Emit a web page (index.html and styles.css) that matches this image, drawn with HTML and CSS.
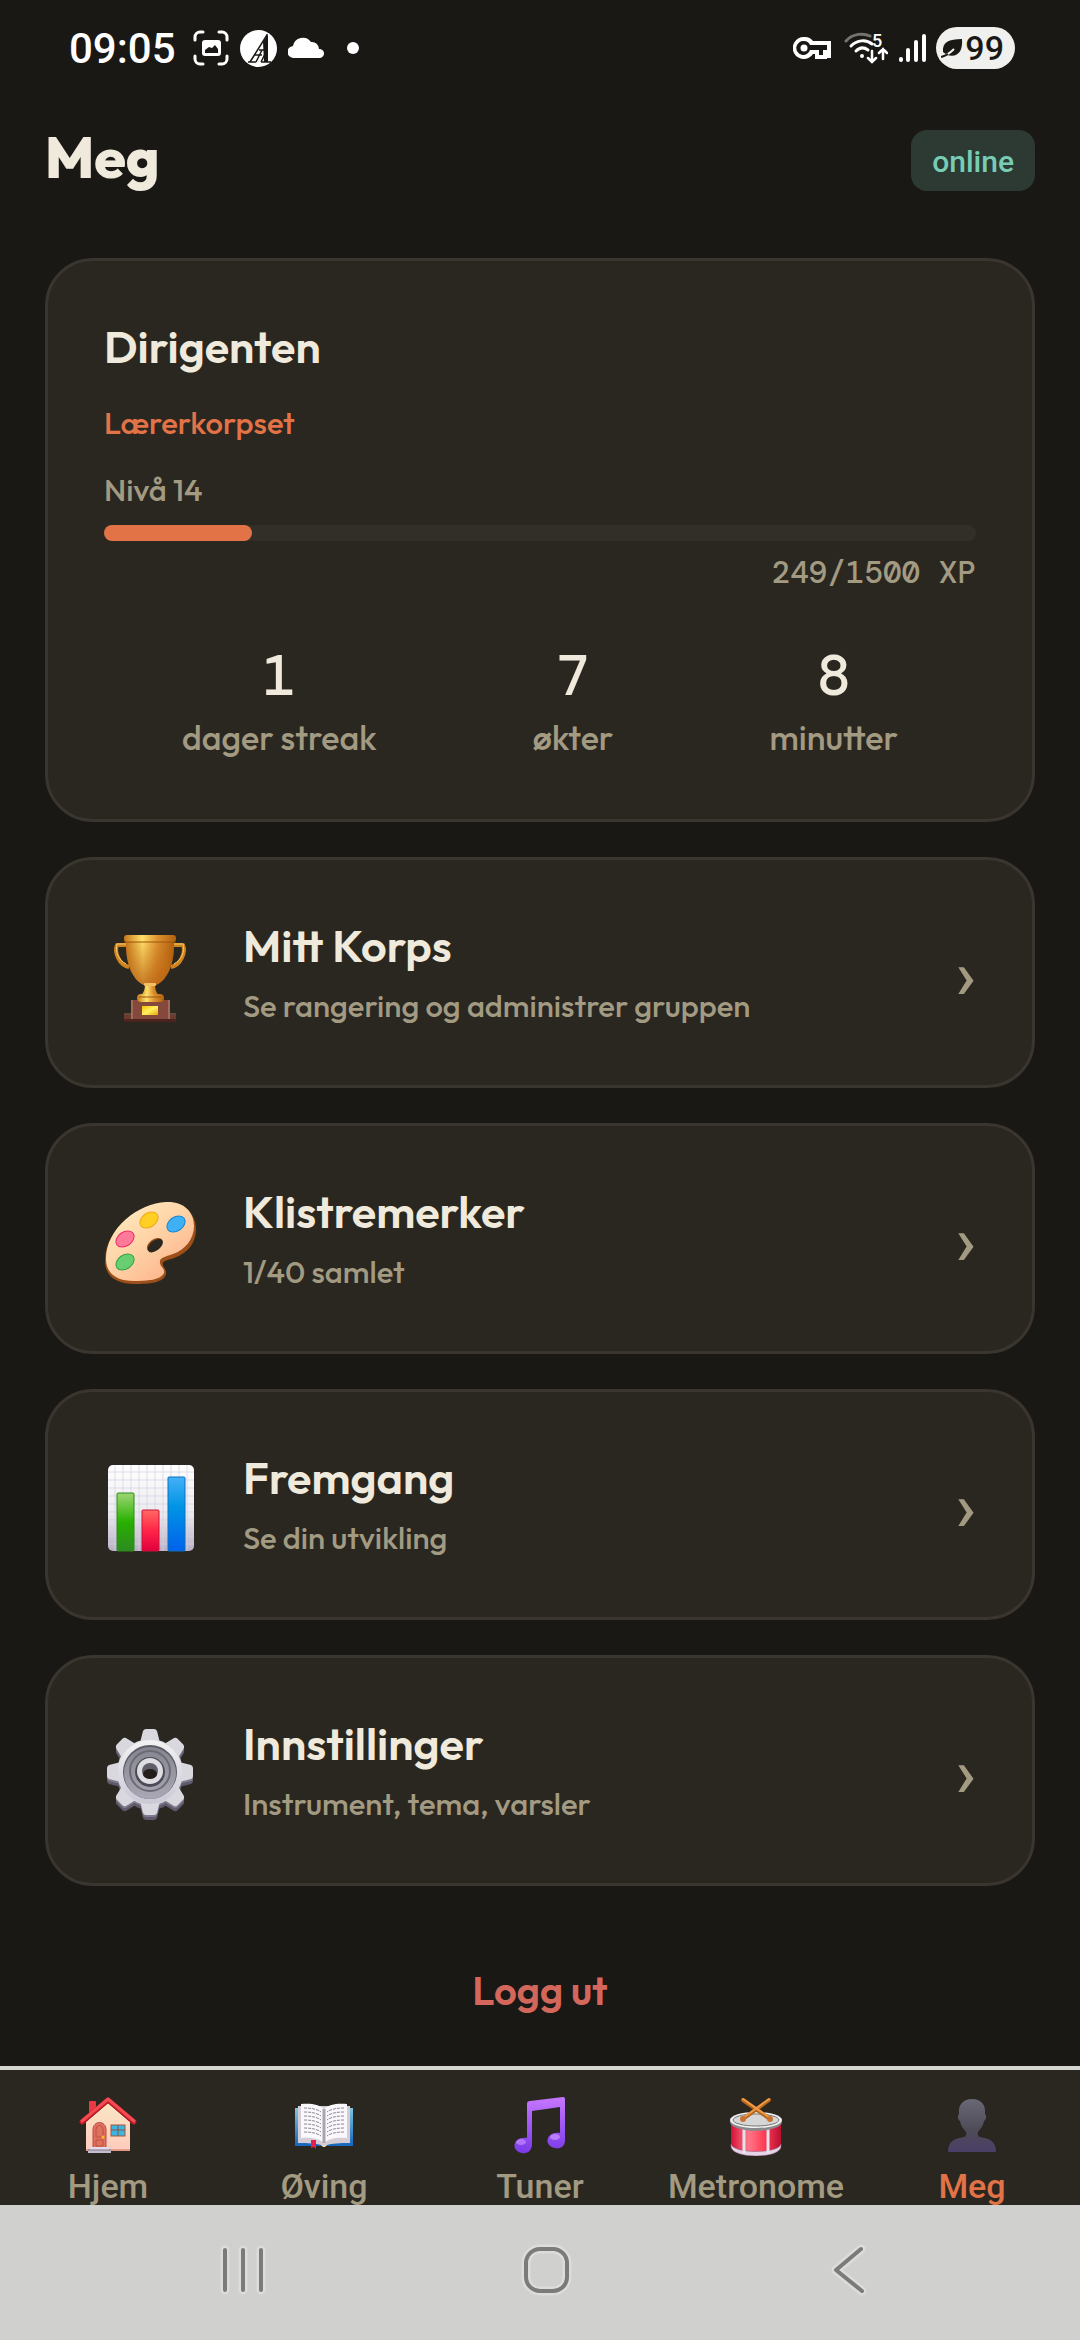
FILE: index.html
```html
<!DOCTYPE html>
<html lang="no">
<head>
<meta charset="utf-8">
<meta name="viewport" content="width=device-width, initial-scale=1">
<title>Meg</title>
<link rel="stylesheet" href="styles.css">
</head>
<body>
<div class="app">
  <div class="status">
    <div class="status-group">
      <span class="clock">09:05</span>
      <svg width="36" height="36" viewBox="0 0 36 36" fill="none" stroke="#fff" stroke-width="3" stroke-linecap="round"><path d="M2 10V7a5 5 0 0 1 5-5h3M26 2h3a5 5 0 0 1 5 5v3M34 26v3a5 5 0 0 1-5 5h-3M10 34H7a5 5 0 0 1-5-5v-3"/><rect x="9" y="10" width="19" height="16" rx="3" fill="#fff" stroke="none"/><path d="M12 23v-3l4-3 3 1 3-3 3 4v4z" fill="#1a1814" stroke="none"/></svg>
      <svg width="37" height="37" viewBox="0 0 37 37"><circle cx="18.500" cy="18.500" r="18.500" fill="#fff"/><path d="M27 4v28M27 5L10 32M8 32h8M21 32h10M14 25h8M19 20h5M22 20l-6 12M25 24l-4 8" stroke="#1a1814" stroke-width="1.500" fill="none"/><path d="M23 12l5-7v27h-4z" fill="#1a1814"/></svg>
      <svg width="37" height="22" viewBox="0 0 37 22"><path d="M6 21a6 6 0 0 1-1-12 10 10 0 0 1 18-4 7 7 0 0 1 8 7 4.500 4.500 0 0 1 1 9z" fill="#fff"/></svg>
      <span class="dot"></span>
    </div>
    <div class="status-group right">
      <svg width="38" height="22" viewBox="0 0 38 22"><path fill="#fff" fill-rule="evenodd" d="M11 0a11 11 0 0 1 9 4h18v17h-4v1H22v-5h-2A11 11 0 1 1 11 0zm0 4a7 7 0 1 0 6 9h9v5h4v-5h4V8H17a7 7 0 0 0-6-4z"/><circle cx="11" cy="11" r="3.500" fill="#fff"/></svg>
      <svg class="wifi" width="44" height="36" viewBox="0 -2 44 36" fill="none" stroke="#fff" stroke-width="3" stroke-linecap="round"><path d="M2 9C9 1 20 1 26 4" stroke="#75736f"/><path d="M7 14c6-6 15-7 21-2M12 19c4-4 8-4 12-1"/><circle cx="18" cy="24" r="2" fill="#fff" stroke="none"/><path d="M28 19v10M24 26l4 4 4-4M39 27V17M35 21l4-4 4 4" stroke-width="2.500"/><text x="28" y="15" class="wifi-band">5</text></svg>
      <svg width="28" height="30" viewBox="0 0 28 30" stroke="#fff" stroke-width="4" stroke-linecap="round"><path d="M3 26v1M10 17v10M18 9v18M26 3v24"/></svg>
      <span class="battery"><svg width="22" height="20" viewBox="0 0 22 20"><path d="M2 14C1 4 8 1 21 1c1 12-4 19-15 16z" fill="#1a1814"/><path d="M0 19c5-1 9-4 13-8" stroke="#f0f0ee" stroke-width="2" fill="none"/><path d="M0 19c3-1 4-1 7-3" stroke="#1a1814" stroke-width="2" fill="none"/></svg>99</span>
    </div>
  </div>

  <header class="header">
    <h1>Meg</h1>
    <span class="badge">online</span>
  </header>

  <main class="content">
    <section class="card profile">
      <h2>Dirigenten</h2>
      <p class="group">Lærerkorpset</p>
      <p class="level">Nivå 14</p>
      <div class="progress" role="progressbar" aria-label="XP" aria-valuenow="249" aria-valuemax="1500"><div class="progress-fill" style="width:17%"></div></div>
      <p class="xp">249/1500 XP</p>
      <div class="stats">
        <div class="stat"><span class="stat-value">1</span><span class="stat-label">dager streak</span></div>
        <div class="stat"><span class="stat-value">7</span><span class="stat-label">økter</span></div>
        <div class="stat"><span class="stat-value">8</span><span class="stat-label">minutter</span></div>
      </div>
    </section>

    <a class="card menu" href="#korps">
      <svg class="menu-icon" viewBox="0 0 92 92">
        <defs>
          <linearGradient id="gold" x1="0" x2="1" y1="0" y2="0"><stop offset="0" stop-color="#c4761a"/><stop offset=".35" stop-color="#ffe06a"/><stop offset=".65" stop-color="#dc9030"/><stop offset="1" stop-color="#b0600c"/></linearGradient>
          <linearGradient id="goldShade" x1="0" x2="0" y1="0" y2="1"><stop offset="0" stop-color="#b85f10" stop-opacity="0"/><stop offset="1" stop-color="#b85f10" stop-opacity=".8"/></linearGradient>
          <linearGradient id="plaque" x1="0" x2="1" y1="0" y2="1"><stop offset="0" stop-color="#f5c400"/><stop offset=".5" stop-color="#fff060"/><stop offset="1" stop-color="#e8a800"/></linearGradient>
        </defs>
        <path d="M23 14H13c-3 7 2 20 12 22M69 14h10c3 7-2 20-12 22" fill="none" stroke="#cf8420" stroke-width="4" stroke-linejoin="round"/>
        <path d="M23 13H13c-2 7 1 16 9 20M69 13h10c2 7-1 16-9 20" fill="none" stroke="#f6c868" stroke-width="1"/>
        <path d="M22 8h48c1 22-5 40-18 46H40C27 48 21 30 22 8z" fill="url(#gold)"/>
        <path d="M22 8h48c1 22-5 40-18 46H40C27 48 21 30 22 8z" fill="url(#goldShade)"/>
        <path d="M41 53h10c0 5 1 9 5 12H36c4-3 5-7 5-12z" fill="url(#gold)"/>
        <rect x="40" y="52" width="12" height="3" rx="1" fill="#f3c064"/>
        <path d="M20 84h52v6H20z" fill="#6b3a30"/><path d="M20 83h52" stroke="#a06a58"/>
        <path d="M27 69h39v20H27z" fill="#84493c"/>
        <path d="M27 69h2v20h-2zM64 69h2v20h-2z" fill="#a3695a"/>
        <rect x="33" y="63" width="27" height="8" rx="4" fill="url(#gold)"/>
        <path d="M35 66h22" stroke="#9c5a10"/>
        <rect x="38" y="75" width="16" height="9" fill="url(#plaque)"/>
        <rect x="20" y="88" width="52" height="3" rx="1" fill="#4c241e"/>
        <rect x="20" y="4" width="52" height="7" rx="3" fill="url(#gold)"/>
        <path d="M20 11h52" stroke="#9c5208"/>
      </svg>
      <span class="menu-text"><span class="menu-title">Mitt Korps</span><span class="menu-sub">Se rangering og administrer gruppen</span></span>
      <span class="chevron">›</span>
    </a>

    <a class="card menu" href="#klistremerker">
      <svg class="menu-icon" viewBox="0 0 92 92">
        <defs><linearGradient id="wood" x1=".1" y1=".1" x2=".8" y2=".9"><stop offset="0" stop-color="#ffeac0"/><stop offset=".5" stop-color="#ffd3a6"/><stop offset="1" stop-color="#fdb48e"/></linearGradient></defs>
        <path fill="#9c4f18" fill-rule="evenodd" d="M63 6c17 0 29 10 29 26 0 14-8 24-22 29-9 3-12 3-11 7 1 4 4 5 3 9-2 9-17 10-31 10C13 87 1 80 1 64 1 31 35 7 63 6zM56 42c-6-1-13 6-12 11 2 6 9 3 13-1 4-4 4-9-1-10z"/>
        <path fill="url(#wood)" fill-rule="evenodd" d="M62 5c17-1 28 9 28 24 0 13-9 24-21 28-9 3-14 4-13 9 1 5 5 5 4 10-3 7-17 8-30 8C12 84 2 76 2 62 2 31 35 6 62 5zM55 41c-6-1-13 6-12 11 2 6 9 3 13-1 4-4 4-9-1-10z"/>
        <g stroke-width="1"><ellipse cx="45" cy="23" rx="10" ry="7" transform="rotate(-35 45 23)" fill="#ffcf24" stroke="#eeaa10"/><ellipse cx="72" cy="27" rx="10" ry="7" transform="rotate(-35 72 27)" fill="#3fb0f4" stroke="#1587d4"/><ellipse cx="21" cy="42" rx="10" ry="7" transform="rotate(-35 21 42)" fill="#ff7a98" stroke="#ea2c6e"/><ellipse cx="21" cy="65" rx="10" ry="7" transform="rotate(-35 21 65)" fill="#68cf70" stroke="#35a050"/></g>
      </svg>
      <span class="menu-text"><span class="menu-title">Klistremerker</span><span class="menu-sub">1/40 samlet</span></span>
      <span class="chevron">›</span>
    </a>

    <a class="card menu" href="#fremgang">
      <svg class="menu-icon" viewBox="0 0 92 92">
        <defs>
          <linearGradient id="paper" x1="0" x2="0" y1="0" y2="1"><stop offset="0" stop-color="#fff"/><stop offset=".55" stop-color="#ececf0"/><stop offset="1" stop-color="#b9b0c6"/></linearGradient>
          <linearGradient id="barGreen" x1="0" x2="0" y1="0" y2="1"><stop offset="0" stop-color="#9ed674"/><stop offset=".5" stop-color="#28b000"/><stop offset="1" stop-color="#2d8a22"/></linearGradient>
          <linearGradient id="barRed" x1="0" x2="0" y1="0" y2="1"><stop offset="0" stop-color="#ff6a62"/><stop offset=".5" stop-color="#ff2548"/><stop offset="1" stop-color="#e0003e"/></linearGradient>
          <linearGradient id="barBlue" x1="0" x2="0" y1="0" y2="1"><stop offset="0" stop-color="#45b0f8"/><stop offset=".4" stop-color="#0094e4"/><stop offset="1" stop-color="#0062ec"/></linearGradient>
        </defs>
        <rect x="4" y="2" width="86" height="86" rx="5" fill="url(#paper)"/>
        <path d="M4 9h86M4 17h86M4 25h86M4 33h86M4 41h86M4 49h86M4 57h86M4 65h86M4 73h86M4 81h86M11 2v86M19 2v86M27 2v86M35 2v86M43 2v86M51 2v86M59 2v86M67 2v86M75 2v86M83 2v86" stroke="#d3d2e2" stroke-width="1" stroke-opacity=".7"/>
        <rect x="13" y="30" width="17" height="58" rx="1" fill="url(#barGreen)" stroke="#2a8c16"/>
        <rect x="38" y="47" width="17" height="41" rx="1" fill="url(#barRed)" stroke="#cf1238"/>
        <rect x="64" y="14" width="17" height="74" rx="1" fill="url(#barBlue)" stroke="#0872be"/>
      </svg>
      <span class="menu-text"><span class="menu-title">Fremgang</span><span class="menu-sub">Se din utvikling</span></span>
      <span class="chevron">›</span>
    </a>

    <a class="card menu" href="#innstillinger">
      <svg class="menu-icon" viewBox="0 0 92 92">
        <defs>
          <linearGradient id="steel" x1="0" x2="0" y1="0" y2="1"><stop offset="0" stop-color="#f2f2f2"/><stop offset="1" stop-color="#cbc8d6"/></linearGradient>
          <linearGradient id="dish" x1="0" x2="0" y1="0" y2="1"><stop offset="0" stop-color="#85858f"/><stop offset="1" stop-color="#a9a8b4"/></linearGradient>
          <g id="cog"><circle cx="46" cy="43" r="33"/><g id="teeth"><path id="tooth" d="M36 14l3-12q1-2 3-2h8q2 0 3 2l3 12z"/><use href="#tooth" transform="rotate(45 46 43)"/><use href="#tooth" transform="rotate(90 46 43)"/><use href="#tooth" transform="rotate(135 46 43)"/></g><use href="#teeth" transform="rotate(180 46 43)"/></g>
        </defs>
        <use href="#cog" y="5" fill="#5f596b"/><use href="#cog" y="2" fill="#807b8c"/>
        <use href="#cog" fill="#d9d8de"/>
        <circle cx="46" cy="43" r="32" fill="url(#steel)"/>
        <circle cx="46" cy="43" r="27" fill="#5c5c68"/><circle cx="46" cy="44" r="26" fill="url(#dish)"/>
        <circle cx="46" cy="42" r="20" fill="none" stroke="#6b6b76" stroke-width="2"/>
        <circle cx="46" cy="43" r="15" fill="#4b4a56"/><circle cx="46" cy="42" r="13" fill="#dedee2"/>
        <circle cx="46" cy="42" r="8" fill="#615e6c"/><ellipse cx="46" cy="45" rx="7" ry="5" fill="#241e1b"/>
      </svg>
      <span class="menu-text"><span class="menu-title">Innstillinger</span><span class="menu-sub">Instrument, tema, varsler</span></span>
      <span class="chevron">›</span>
    </a>

    <button class="logout" type="button">Logg ut</button>
  </main>

  <nav class="tabs">
    <a class="tab" href="#hjem">
      <svg class="tab-icon" viewBox="0 0 60 60">
        <defs><linearGradient id="wall" x1="0" x2="0" y1="0" y2="1"><stop offset="0" stop-color="#fbe6c4"/><stop offset="1" stop-color="#ffcabc"/></linearGradient></defs>
        <path d="M11 6q0-1 1-1h5q1 0 1 1v10l-7 6z" fill="#e63a44"/>
        <path d="M8 26L30 7l22 19v29H8z" fill="url(#wall)"/>
        <path d="M8 54h44" stroke="#e59a88" stroke-width="2"/>
        <path d="M4 26L30 4l26 22" fill="none" stroke="#c21c28" stroke-width="5" stroke-linecap="round" stroke-linejoin="round"/>
        <path d="M4 25L30 3l26 22" fill="none" stroke="#f44a52" stroke-width="3" stroke-linecap="round" stroke-linejoin="round"/>
        <path d="M15 52V34c0-10 13-10 13 0v18z" fill="#e0705f" stroke="#b54c42"/><path d="M18 41v-7c0-6 7-6 7 0v7zM18 44h7v6h-7z" fill="none" stroke="#b9523f"/><circle cx="25" cy="41" r="1.500" fill="#ffbe20"/>
        <rect x="33" y="29" width="14" height="11" fill="#3ab6e2" stroke="#a5573c"/><path d="M40 29v11M33 34h14" stroke="#8d5340"/>
        <path d="M12 51h19v3H12z" fill="#e4dbea"/><path d="M10 54h23v3H10z" fill="#c5bccd"/><path d="M10 54h23" stroke="#81778c"/>
      </svg>
      <span>Hjem</span>
    </a>
    <a class="tab" href="#oving">
      <svg class="tab-icon" viewBox="0 0 60 60">
        <defs><linearGradient id="cover" x1="0" x2="0" y1="0" y2="1"><stop offset="0" stop-color="#7fc8de"/><stop offset="1" stop-color="#1465bc"/></linearGradient></defs>
        <path d="M1 12h58v38H1z" fill="url(#cover)"/>
        <path d="M4 10h52v37c-10 0-18 0-26 3-8-3-16-3-26-3z" fill="#d5cdd6"/>
        <path d="M7 8c9-1 18 0 23 5 5-5 14-6 23-5v34c-9-1-18 0-23 5-5-5-14-6-23-5z" fill="#fbf8fd"/>
        <path d="M30 13v34" stroke="#aaa5ae" stroke-width="3"/>
        <path id="lines" d="M10 12c7 0 13 1 17 4M10 16c7 0 13 1 17 4M10 20c7 0 13 1 17 4M10 24c7 0 13 1 17 4M10 28c7 0 13 1 17 4M10 32c7 0 13 1 17 4M10 36c7 0 13 1 17 4" fill="none" stroke="#8b8790" stroke-dasharray="3 1"/>
        <use href="#lines" transform="translate(60 0) scale(-1 1)"/>
        <path d="M17 44h5v9l-2-2-3 1z" fill="#e51e50"/><path d="M27 49h6l-2 2h-2z" fill="#f4d9ae"/>
      </svg>
      <span>Øving</span>
    </a>
    <a class="tab" href="#tuner">
      <svg class="tab-icon" viewBox="0 0 60 60">
        <defs><linearGradient id="note" x1="0" x2="0" y1="0" y2="1"><stop offset="0" stop-color="#c677ff"/><stop offset="1" stop-color="#7a3ae8"/></linearGradient></defs>
        <path d="M17 8q0-3 3-3l33-4q2 0 2 2v41c0 7-5 9-10 8-12-2-9-17 5-15V11l-28 4v33c0 7-5 10-10 9-12-2-9-17 5-15z" fill="url(#note)"/>
        <ellipse cx="11" cy="46" rx="5" ry="3" fill="#c487ff" opacity=".7"/><ellipse cx="45" cy="41" rx="5" ry="3" fill="#cf93ff" opacity=".7"/>
      </svg>
      <span>Tuner</span>
    </a>
    <a class="tab" href="#metronome">
      <svg class="tab-icon" viewBox="0 0 60 60">
        <defs><linearGradient id="shell" x1="0" x2="1" y1="0" y2="0"><stop offset="0" stop-color="#d41038"/><stop offset=".35" stop-color="#ff7688"/><stop offset=".65" stop-color="#ff4058"/><stop offset="1" stop-color="#b80f30"/></linearGradient></defs>
        <path d="M5 25v25c4 12 46 12 50 0V25z" fill="url(#shell)"/>
        <path d="M5 48c2 10 48 10 50 0v3c-2 12-48 12-50 0z" fill="#e3d4e8" stroke="#8e5a7c" stroke-width=".500"/>
        <path d="M18 32v26M42 32v26" stroke="#e8e2ec" stroke-width="3"/>
        <ellipse cx="30" cy="26" rx="26" ry="9" fill="#8a8a8c"/><ellipse cx="30" cy="24" rx="26" ry="8" fill="#f2f2f2"/><ellipse cx="30" cy="24" rx="23" ry="6" fill="#d6d6d6" stroke="#77777a"/>
        <path d="M17 4l27 19M43 4L17 23" stroke="#b5651b" stroke-width="4" stroke-linecap="round"/><path d="M17 3l27 19M43 3L17 22" stroke="#f09a48" stroke-width="2" stroke-linecap="round"/>
        <circle cx="17" cy="23" r="3" fill="#c87430"/><circle cx="44" cy="23" r="3" fill="#c87430"/>
      </svg>
      <span>Metronome</span>
    </a>
    <a class="tab active" href="#meg" aria-current="page">
      <svg class="tab-icon" viewBox="0 0 60 60">
        <defs><linearGradient id="bust" x1="0" x2="0" y1="0" y2="1"><stop offset="0" stop-color="#696875"/><stop offset=".6" stop-color="#4e4b58"/><stop offset="1" stop-color="#4b3e68"/></linearGradient></defs>
        <path d="M30 3c10 0 14 7 13 15 2 2 1 6-1 7-1 6-4 8-6 11-1 4 1 5 6 6 8 1 12 6 12 14H6c0-8 4-13 12-14 5-1 7-2 6-6-2-3-5-5-6-11-2-1-3-5-1-7C16 10 20 3 30 3z" fill="url(#bust)"/>
      </svg>
      <span>Meg</span>
    </a>
  </nav>

  <div class="sysnav">
    <button type="button" aria-label="Nylige"><svg width="48" height="52" viewBox="0 0 48 52" stroke-linecap="round"><path d="M6 6v40M24 6v40M42 6v40" stroke="#dcdcda" stroke-width="9"/><path d="M6 6v40M24 6v40M42 6v40" stroke="#7b7b79" stroke-width="4"/></svg></button>
    <button type="button" aria-label="Hjem"><svg width="52" height="52" viewBox="0 0 52 52" fill="none"><rect x="6" y="5" width="41" height="42" rx="14" stroke="#dcdcda" stroke-width="9"/><rect x="6" y="5" width="41" height="42" rx="14" stroke="#7b7b79" stroke-width="4"/></svg></button>
    <button type="button" aria-label="Tilbake"><svg width="36" height="52" viewBox="0 0 36 52" fill="none" stroke-linecap="round" stroke-linejoin="round"><path d="M30 5L5 26l26 21" stroke="#dcdcda" stroke-width="9"/><path d="M30 5L5 26l26 21" stroke="#7b7b79" stroke-width="4"/></svg></button>
  </div>
</div>
</body>
</html>
```
FILE: styles.css
```css
* { box-sizing: border-box; }
body, h1, h2, p { margin: 0; }
body {
  background: #1a1814;
  color: #f0eadc;
  font-family: "Outfit", "Lato", sans-serif;
}
a { color: inherit; text-decoration: none; }
button { border: 0; background: none; font: inherit; padding: 0; cursor: pointer; }
svg { display: block; flex: none; }

.app { min-height: 100vh; display: flex; flex-direction: column; }

/* Status bar */
.status {
  display: flex;
  justify-content: space-between;
  align-items: center;
  height: 96px;
  padding: 0 65px 0 69px;
  font-family: "Roboto", sans-serif;
  font-weight: 500;
  color: #fff;
}
.status-group { display: flex; align-items: center; gap: 11px; }
.status-group.right { gap: 10px; }
.clock { font-size: 42px; margin-right: 6px; }
.dot { width: 12px; height: 12px; border-radius: 50%; background: #fff; margin-left: 11px; }
.wifi { margin-left: 3px; }
.wifi-band { font: 500 18px "Roboto", sans-serif; fill: #fff; stroke: none; }
.battery {
  display: flex;
  align-items: center;
  gap: 2px;
  height: 42px;
  padding: 0 11px 0 5px;
  border-radius: 21px;
  background: #f0f0ee;
  color: #1a1814;
  font-size: 34px;
}

/* Header */
.header {
  display: flex;
  justify-content: space-between;
  align-items: center;
  height: 129px;
  padding: 0 45px;
}
h1 { padding-bottom: 8px; font-size: 57px; line-height: 72px; font-weight: 800; }
.badge {
  padding: 12px 21px 9px;
  border-radius: 16px;
  background: #2c3a33;
  color: #76cdb3;
  font: 500 30px/40px "Roboto", sans-serif;
}

/* Cards */
.content {
  flex: 1;
  display: flex;
  flex-direction: column;
  gap: 35px;
  padding: 33px 45px 0;
}
.card {
  border: 3px solid #3a352e;
  border-radius: 48px;
  background: #2a2721;
  padding: 56px 56px 57px;
}
.profile { padding-bottom: 59px; }
h2, .menu-title { font-size: 45px; line-height: 60px; font-weight: 600; }
.group, .level, .xp, .menu-sub { font-size: 31px; line-height: 44px; font-weight: 500; color: #a39a82; }
.group { margin-top: 24px; color: #e27347; }
.level { margin-top: 23px; }
.progress { height: 16px; margin-top: 13px; border-radius: 8px; background: #322e28; }
.progress-fill { height: 100%; border-radius: 8px; background: #e27347; }
.xp, .stat-value { font-family: "DM Mono", "DejaVu Sans Mono", monospace; }
.xp { margin-top: 10px; text-align: right; }
.stats { display: flex; justify-content: space-around; margin-top: 49px; }
.stat { display: flex; flex-direction: column; align-items: center; gap: 8px; }
.stat-value { font-size: 56px; line-height: 64px; font-weight: 500; }
.stat-label { font-size: 34px; line-height: 44px; font-weight: 500; color: #a39a82; }

.menu { display: flex; align-items: center; gap: 47px; }
.menu-icon { width: 92px; height: 102px; padding-top: 10px; }
.menu-text { flex: 1; display: flex; flex-direction: column; gap: 8px; }
.chevron { padding-top: 8px; font: 500 68px/80px "Roboto", sans-serif; color: #a39a82; }

.logout {
  align-self: center;
  margin-top: 34px;
  color: #d4675b;
  font-size: 40px;
  line-height: 70px;
  font-weight: 600;
}

/* Bottom tabs */
.tabs {
  display: grid;
  grid-template-columns: repeat(5, 1fr);
  height: 139px;
  padding-top: 26px;
  border-top: 4px solid #d6d6d2;
  background: #2a2721;
  overflow: hidden;
}
.tab {
  display: flex;
  flex-direction: column;
  align-items: center;
  gap: 9px;
  color: #a39a82;
  font: 500 34px/42px "Roboto", sans-serif;
}
.tab.active { color: #e27347; }
.tab-icon { width: 60px; height: 60px; }

/* System navigation */
.sysnav {
  display: grid;
  grid-template-columns: repeat(3, 1fr);
  align-items: center;
  justify-items: center;
  height: 135px;
  padding: 0 80px 6px 92px;
  background: #d0d0ce;
}
```
